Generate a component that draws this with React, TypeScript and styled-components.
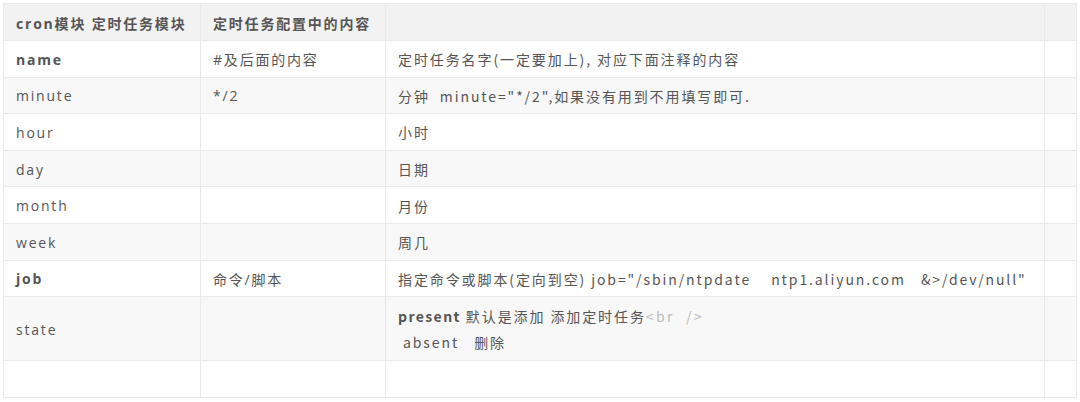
import styled, { createGlobalStyle } from "styled-components";

const GlobalStyle = createGlobalStyle`
  body {
    margin: 0;
    background: #fff;
  }
`;

const Wrap = styled.div`
  padding: 3px 4px 0 3px;
`;

const Table = styled.table`
  width: 1073px;
  border-collapse: collapse;
  table-layout: fixed;
  border: 1px solid #e9e9e9;
  font-family: "Open Sans", "Noto Sans CJK SC", sans-serif;
  font-size: 14px;
  color: #555;
`;

const Row = styled.tr<{ $striped?: boolean; $head?: boolean }>`
  background: ${(p) => (p.$head ? "#f2f2f2" : p.$striped ? "#f8f8f8" : "#fff")};
`;

const Cell = styled.td<{ $tall?: boolean }>`
  box-sizing: border-box;
  height: ${(p) => (p.$tall ? "64px" : "36.6px")};
  padding: 1px 12px 0;
  border: 1px solid #e9e9e9;
  letter-spacing: 1.8px;
  vertical-align: middle;
  white-space: nowrap;
`;

const HeadCell = styled(Cell).attrs({ as: "th" })`
  height: 37px;
  text-align: left;
  font-weight: 700;
`;

const DescCell = styled(Cell)`
  letter-spacing: 1.9px;
  font-family: "Noto Sans CJK SC", "Open Sans", sans-serif;
  white-space: pre;
`;

const Key = styled.span<{ $bold?: boolean }>`
  font-weight: ${(p) => (p.$bold ? 700 : 400)};
`;

const Strong = styled.span`
  font-weight: 700;
  letter-spacing: 1.4px;
`;

const Line = styled.div`
  line-height: 26px;
`;

const Muted = styled.span`
  color: #bbb;
  letter-spacing: 2.4px;
`;

const rows: { key: string; bold?: boolean; value?: string; desc?: string }[] = [
  { key: "name", bold: true, value: "#及后面的内容", desc: "定时任务名字(一定要加上), 对应下面注释的内容" },
  { key: "minute", value: "*/2", desc: '分钟  minute="*/2",如果没有用到不用填写即可.' },
  { key: "hour", desc: "小时" },
  { key: "day", desc: "日期" },
  { key: "month", desc: "月份" },
  { key: "week", desc: "周几" },
  {
    key: "job",
    bold: true,
    value: "命令/脚本",
    desc: '指定命令或脚本(定向到空) job="/sbin/ntpdate    ntp1.aliyun.com   &>/dev/null"',
  },
];

const App = () => {
  return (
    <Wrap>
      <GlobalStyle />
      <Table>
        <colgroup>
          <col style={{ width: 197 }} />
          <col style={{ width: 185 }} />
          <col style={{ width: 659 }} />
          <col style={{ width: 32 }} />
        </colgroup>
        <thead>
          <Row $head>
            <HeadCell>cron模块 定时任务模块</HeadCell>
            <HeadCell>定时任务配置中的内容</HeadCell>
            <HeadCell />
            <HeadCell />
          </Row>
        </thead>
        <tbody>
          {rows.map((r, i) => (
            <Row key={r.key} $striped={i % 2 === 1}>
              <Cell>
                <Key $bold={r.bold}>{r.key}</Key>
              </Cell>
              <Cell>{r.value}</Cell>
              <DescCell>{r.desc}</DescCell>
              <Cell />
            </Row>
          ))}
          <Row $striped>
            <Cell $tall>state</Cell>
            <Cell $tall />
            <DescCell $tall>
              <Line>
                <Strong>present</Strong> 默认是添加 添加定时任务<Muted>{"<br  />"}</Muted>
              </Line>
              <Line>{" absent   删除"}</Line>
            </DescCell>
            <Cell $tall />
          </Row>
          <Row>
            <Cell />
            <Cell />
            <DescCell />
            <Cell />
          </Row>
        </tbody>
      </Table>
    </Wrap>
  );
};

export default App;
